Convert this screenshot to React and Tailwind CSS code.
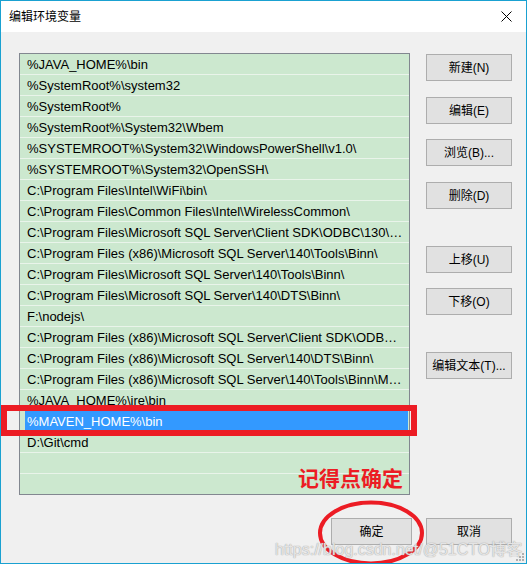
import React from 'react';

const font = { fontFamily: '"Liberation Sans", "Noto Sans CJK SC", sans-serif' };

const paths = [
    '%JAVA_HOME%\\bin',
    '%SystemRoot%\\system32',
    '%SystemRoot%',
    '%SystemRoot%\\System32\\Wbem',
    '%SYSTEMROOT%\\System32\\WindowsPowerShell\\v1.0\\',
    '%SYSTEMROOT%\\System32\\OpenSSH\\',
    'C:\\Program Files\\Intel\\WiFi\\bin\\',
    'C:\\Program Files\\Common Files\\Intel\\WirelessCommon\\',
    'C:\\Program Files\\Microsoft SQL Server\\Client SDK\\ODBC\\130\\Tools\\Binn\\',
    'C:\\Program Files (x86)\\Microsoft SQL Server\\140\\Tools\\Binn\\',
    'C:\\Program Files\\Microsoft SQL Server\\140\\Tools\\Binn\\',
    'C:\\Program Files\\Microsoft SQL Server\\140\\DTS\\Binn\\',
    'F:\\nodejs\\',
    'C:\\Program Files (x86)\\Microsoft SQL Server\\Client SDK\\ODBC\\130\\Tools\\Binn\\',
    'C:\\Program Files (x86)\\Microsoft SQL Server\\140\\DTS\\Binn\\',
    'C:\\Program Files (x86)\\Microsoft SQL Server\\140\\Tools\\Binn\\ManagementStudio\\',
    '%JAVA_HOME%\\jre\\bin',
    '%MAVEN_HOME%\\bin',
    'D:\\Git\\cmd',
    '',
    '',
];

function WinButton({ children, className = '' }) {
    return (
        <button
            className={`h-[27px] bg-[#e1e1e1] border border-[#adadad] text-[12px] text-black flex items-center justify-center ${className}`}
        >
            {children}
        </button>
    );
}

export default function App() {
    return (
        <div className="w-[528px] h-[565px] bg-white" style={font}>
            <div className="relative w-[527px] h-[564px] border border-[#1aa1d1] bg-[#f0f0f0] flex flex-col overflow-hidden">
                {/* title bar */}
                <div className="h-[31px] bg-white flex items-center justify-between pl-[8px] pr-[14px]">
                    <span className="text-[12px] text-black">编辑环境变量</span>
                    <svg width="11" height="11" viewBox="0 0 11 11">
                        <path d="M0.5 0.5 L10.5 10.5 M10.5 0.5 L0.5 10.5" stroke="#000" strokeWidth="1" />
                    </svg>
                </div>

                <div className="flex flex-col pl-[18px] pr-[14px] pt-[21px]">
                    <div className="flex">
                        <div className="w-[391px] h-[442px] border border-[#828790] bg-[#cce8cf] overflow-hidden">
                            {paths.map((p, i) => {
                                const selected = i === 17;
                                return (
                                    <div key={i} className="h-[21px] border-b border-[#e9f4ea] flex">
                                        <div
                                            className={`ml-[5px] mr-[1px] flex-1 min-w-0 pl-[2px] pr-[5px] pt-[2px] text-[13px] leading-[18px] whitespace-nowrap overflow-hidden text-ellipsis ${
                                                selected ? 'bg-[#3399ff] text-white' : 'text-black'
                                            }`}
                                        >
                                            {p}
                                        </div>
                                    </div>
                                );
                            })}
                        </div>
                        <div className="ml-[16px] w-[86px] flex flex-col">
                            <WinButton className="mt-[1px]">新建(N)</WinButton>
                            <WinButton className="mt-[16px]">编辑(E)</WinButton>
                            <WinButton className="mt-[15px]">浏览(B)...</WinButton>
                            <WinButton className="mt-[16px]">删除(D)</WinButton>
                            <WinButton className="mt-[37px]">上移(U)</WinButton>
                            <WinButton className="mt-[15px]">下移(O)</WinButton>
                            <WinButton className="mt-[37px]">编辑文本(T)...</WinButton>
                        </div>
                    </div>
                    <div className="flex justify-end gap-[14px] mt-[23px]">
                        <WinButton className="w-[81px]">确定</WinButton>
                        <WinButton className="w-[86px]">取消</WinButton>
                    </div>
                </div>

                {/* annotations */}
                <div className="absolute left-0 top-[404px] w-[416px] h-[31px] border-[6px] border-[#ec1c24]" />
                <div
                    className="absolute left-[297px] top-[466px] text-[21px] font-bold text-[#ec1c24] leading-none"
                    style={{ fontFamily: '"Noto Sans CJK SC", sans-serif' }}
                >
                    记得点确定
                </div>
                <svg className="absolute left-[316px] top-[499px]" width="108" height="66" viewBox="0 0 108 66">
                    <ellipse cx="54" cy="33" rx="51" ry="30.5" fill="none" stroke="#ec1c24" strokeWidth="4" />
                </svg>
                <div className="absolute left-[274px] top-[537px] text-[16px] text-white/70 [text-shadow:0_0_1px_#aaa,0_0_1px_#aaa]">
                    https://blog.csdn.net/@51CTO博客
                </div>
                <svg className="absolute right-0 bottom-0" width="12" height="12" viewBox="0 0 12 12">
                    <rect x="8" y="2" width="2" height="2" fill="#b0b0b0" />
                    <rect x="5" y="5" width="2" height="2" fill="#b0b0b0" />
                    <rect x="8" y="5" width="2" height="2" fill="#b0b0b0" />
                    <rect x="2" y="8" width="2" height="2" fill="#b0b0b0" />
                    <rect x="5" y="8" width="2" height="2" fill="#b0b0b0" />
                    <rect x="8" y="8" width="2" height="2" fill="#b0b0b0" />
                </svg>
            </div>
        </div>
    );
}
